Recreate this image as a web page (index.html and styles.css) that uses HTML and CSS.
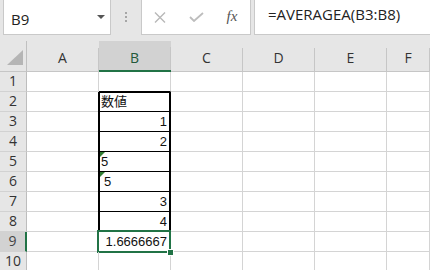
FILE: index.html
```html
<!DOCTYPE html>
<html lang="ja">
<head>
<meta charset="utf-8">
<link rel="stylesheet" href="styles.css">
</head>
<body>
<div class="toolbar">
  <div class="namebox">
    <span class="nb-text">B9</span>
    <svg class="nb-arrow" width="8" height="4" viewBox="0 0 8 4"><polygon points="0,0 8,0 4,4" fill="#555"/></svg>
  </div>
  <div class="grip"><i></i><i></i><i></i></div>
  <div class="fxbox">
    <span class="slot">
      <svg width="12" height="11" viewBox="0 0 12 11"><path d="M1 0.5 L11 10.5 M11 0.5 L1 10.5" stroke="#b8b8b8" stroke-width="1.4" fill="none"/></svg>
    </span>
    <span class="slot">
      <svg width="15" height="10" viewBox="0 0 15 10"><path d="M1 5 L5 9 L14 1" stroke="#bdbdbd" stroke-width="1.8" fill="none"/></svg>
    </span>
    <span class="slot fx">fx</span>
  </div>
  <div class="formula">=AVERAGEA(B3:B8)</div>
</div>
<div class="sheet">
  <div class="corner"><svg width="26" height="30" viewBox="0 0 26 30"><polygon points="23,9 23,24 7,24" fill="#b5b5b5"/></svg></div>
  <div class="ch">A</div><div class="ch sel">B</div><div class="ch">C</div><div class="ch">D</div><div class="ch">E</div><div class="ch">F</div>

  <div class="rh">1</div><div class="c"></div><div class="c b1"></div><div class="c"></div><div class="c"></div><div class="c"></div><div class="c"></div>
  <div class="rh">2</div><div class="c"></div><div class="c bx btop txt">数値</div><div class="c"></div><div class="c"></div><div class="c"></div><div class="c"></div>
  <div class="rh">3</div><div class="c"></div><div class="c bx num">1</div><div class="c"></div><div class="c"></div><div class="c"></div><div class="c"></div>
  <div class="rh">4</div><div class="c"></div><div class="c bx num">2</div><div class="c"></div><div class="c"></div><div class="c"></div><div class="c"></div>
  <div class="rh">5</div><div class="c"></div><div class="c bx txt flag">5</div><div class="c"></div><div class="c"></div><div class="c"></div><div class="c"></div>
  <div class="rh">6</div><div class="c"></div><div class="c bx txt flag ind">5</div><div class="c"></div><div class="c"></div><div class="c"></div><div class="c"></div>
  <div class="rh">7</div><div class="c"></div><div class="c bx num">3</div><div class="c"></div><div class="c"></div><div class="c"></div><div class="c"></div>
  <div class="rh">8</div><div class="c"></div><div class="c bx num">4</div><div class="c"></div><div class="c"></div><div class="c"></div><div class="c"></div>
  <div class="rh rsel">9</div><div class="c"></div><div class="c num active">1.6666667</div><div class="c"></div><div class="c"></div><div class="c"></div><div class="c"></div>
  <div class="rh">10</div><div class="c"></div><div class="c"></div><div class="c"></div><div class="c"></div><div class="c"></div><div class="c"></div>
</div>
</body>
</html>
```
FILE: styles.css
```css
html, body {
  margin: 0;
  padding: 0;
}
body {
  width: 430px;
  height: 270px;
  overflow: hidden;
  background: #e6e6e6;
  font-family: "Liberation Sans", "Noto Sans CJK JP", sans-serif;
  color: #222;
}
.toolbar {
  display: flex;
  height: 41px;
  padding-left: 3px;
  box-sizing: border-box;
}
.namebox {
  width: 108px;
  height: 36px;
  margin-top: -1px;
  box-sizing: border-box;
  border: 1px solid #c9c9c9;
  background: #fff;
  display: flex;
  align-items: flex-start;
  justify-content: space-between;
  padding: 0 5px 0 7px;
  flex: none;
}
.nb-text {
  font-family: "Open Sans", sans-serif;
  font-size: 15px;
  line-height: 15px;
  padding-top: 12px;
  color: #222;
}
.nb-arrow {
  margin-top: 15px;
}
.grip {
  width: 30px;
  flex: none;
  display: flex;
  flex-direction: column;
  align-items: center;
  gap: 2px;
  padding-top: 12px;
  box-sizing: border-box;
}
.grip i {
  display: block;
  width: 2px;
  height: 2px;
  background: #a6a6a6;
}
.fxbox {
  width: 110px;
  height: 36px;
  margin-top: -1px;
  box-sizing: border-box;
  border: 1px solid #c9c9c9;
  background: #fff;
  display: flex;
  flex: none;
}
.slot {
  width: 36px;
  height: 34px;
  display: flex;
  align-items: center;
  justify-content: center;
}
.fx {
  font-family: "Liberation Serif", serif;
  font-style: italic;
  font-size: 15px;
  color: #555;
  padding-bottom: 2px;
  box-sizing: border-box;
}
.formula {
  flex: 1;
  height: 36px;
  margin-top: -1px;
  margin-left: 3px;
  box-sizing: border-box;
  border: 1px solid #c9c9c9;
  border-right: none;
  background: #fff;
  padding-left: 13px;
  padding-top: 7px;
  font-family: "Open Sans", sans-serif;
  font-size: 15px;
  line-height: 15px;
  color: #222;
  white-space: nowrap;
}
.sheet {
  display: grid;
  grid-template-columns: 27px repeat(5, 72px) 1fr;
  grid-template-rows: 31px repeat(10, 20px);
  background: #fff;
}
.corner {
  background: #e6e6e6;
  border-right: 1px solid #c0c0c0;
  border-bottom: 1px solid #c6c6c6;
  box-sizing: border-box;
}
.corner svg { display: block; }
.ch {
  background: #e6e6e6 linear-gradient(#c6c6c6, #c6c6c6) right bottom / 1px 23px no-repeat;
  border-bottom: 1px solid #c6c6c6;
  box-sizing: border-box;
  text-align: center;
  font-family: "Open Sans", sans-serif;
  font-size: 14px;
  line-height: 14px;
  padding-top: 10px;
  padding-right: 1px;
  color: #333;
}
.ch.sel {
  background-color: #d2d2d2;
  border-bottom: 2px solid #217346;
  color: #24593a;
}
.rh {
  background: #e6e6e6;
  border-right: 1px solid #bdbdbd;
  border-bottom: 1px solid #d2d2d2;
  box-sizing: border-box;
  text-align: center;
  font-family: "Open Sans", sans-serif;
  font-size: 14px;
  line-height: 18px;
  color: #333;
}
.rh.rsel {
  background: #d2d2d2;
  border-right: 2px solid #217346;
  color: #444;
}
.c {
  border-right: 1px solid #d4d4d4;
  border-bottom: 1px solid #d4d4d4;
  box-sizing: border-box;
  font-size: 13px;
  line-height: 20px;
  color: #111;
  white-space: nowrap;
  position: relative;
}
.c.b1 { border-bottom-color: #000; }
.c.bx {
  border-right-color: #000;
  border-bottom-color: #000;
  box-shadow: -1px 0 0 #000, inset 1px 0 0 #000, inset -1px 0 0 #000;
}
.c.bx.btop {
  box-shadow: -1px 0 0 #000, inset 1px 0 0 #000, inset -1px 0 0 #000, inset 0 1px 0 #000;
}
.num {
  text-align: right;
  padding-right: 3px;
}
.txt {
  padding-left: 2px;
}
.txt.ind { padding-left: 5px; }
.flag::before {
  content: "";
  position: absolute;
  left: 1px;
  top: 0;
  border-top: 5px solid #2f7d32;
  border-right: 5px solid transparent;
}
.active::after {
  content: "";
  position: absolute;
  left: -2px;
  top: -2px;
  right: -1px;
  bottom: -2px;
  border: 2px solid #217346;
}
.active .handle { display: none; }
.active {
  overflow: visible;
}
.sheet .active + .c::before {
  content: "";
  position: absolute;
  left: -4px;
  bottom: -5px;
  width: 5px;
  height: 5px;
  background: #217346;
  border: 1px solid #fff;
  z-index: 2;
}
```
